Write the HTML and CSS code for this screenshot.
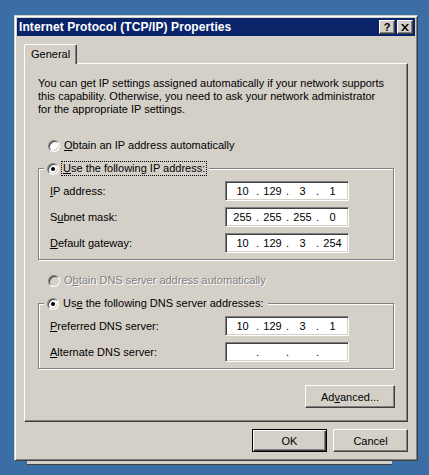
FILE: index.html
```html
<!DOCTYPE html>
<html lang="en">
<head>
    <meta charset="UTF-8">
    <meta name="viewport" content="width=device-width, initial-scale=1.0">
    <title>Internet Protocol (TCP/IP) Properties</title>
    <link rel="stylesheet" href="styles.css">
</head>
<body>
    <div class="window">
        <header class="title-bar">
            <span class="title-text">Internet Protocol (TCP/IP) Properties</span>
            <div class="caption-buttons">
                <span class="caption-btn">?</span>
                <span class="caption-btn close">
                    <svg width="8" height="7" viewBox="0 0 8 7"><path d="M0 0h2l2 2.5 2-2.5h2l-3 3.5 3 3.5h-2l-2-2.5-2 2.5h-2l3-3.5z" fill="#000"/></svg>
                </span>
            </div>
        </header>

        <div class="window-body">
            <div class="tabs">
                <div class="tab">General</div>
            </div>
            <div class="panel">
                <p class="intro">You can get IP settings assigned automatically if your network supports<br>this capability. Otherwise, you need to ask your network administrator<br>for the appropriate IP settings.</p>

                <div class="radio-row first-radio">
                    <span class="radio"></span>
                    <span class="label"><u>O</u>btain an IP address automatically</span>
                </div>

                <div class="group">
                    <div class="group-title">
                        <span class="radio checked"></span>
                        <span class="label focused"><u>U</u>se the following IP address:</span>
                    </div>
                    <div class="field-grid">
                        <span><u>I</u>P address:</span>
                        <div class="ip-field"><span>10</span><i>.</i><span>129</span><i>.</i><span>3</span><i>.</i><span>1</span></div>
                        <span>S<u>u</u>bnet mask:</span>
                        <div class="ip-field"><span>255</span><i>.</i><span>255</span><i>.</i><span>255</span><i>.</i><span>0</span></div>
                        <span><u>D</u>efault gateway:</span>
                        <div class="ip-field"><span>10</span><i>.</i><span>129</span><i>.</i><span>3</span><i>.</i><span>254</span></div>
                    </div>
                </div>

                <div class="radio-row disabled">
                    <span class="radio"></span>
                    <span class="label">O<u>b</u>tain DNS server address automatically</span>
                </div>

                <div class="group">
                    <div class="group-title">
                        <span class="radio checked"></span>
                        <span class="label">Us<u>e</u> the following DNS server addresses:</span>
                    </div>
                    <div class="field-grid">
                        <span><u>P</u>referred DNS server:</span>
                        <div class="ip-field"><span>10</span><i>.</i><span>129</span><i>.</i><span>3</span><i>.</i><span>1</span></div>
                        <span><u>A</u>lternate DNS server:</span>
                        <div class="ip-field"><span></span><i>.</i><span></span><i>.</i><span></span><i>.</i><span></span></div>
                    </div>
                </div>

                <div class="advanced-row">
                    <button class="btn wide">Ad<u>v</u>anced...</button>
                </div>
            </div>

            <div class="dialog-buttons">
                <button class="btn default">OK</button>
                <button class="btn">Cancel</button>
            </div>
        </div>
    </div>
    <div class="behind"></div>
</body>
</html>
```

FILE: styles.css
```css
body {
    margin: 0;
    padding: 15px 0 0 14px;
    background-color: #3a6ea5;
    font-family: 'Liberation Sans', Arial, sans-serif;
    font-size: 11px;
    color: #000000;
}
u {
    text-decoration: underline;
    text-underline-offset: 1px;
}
.window {
    width: 404px;
    box-sizing: border-box;
    background-color: #d4d0c8;
    border: 1px solid;
    border-color: #d4d0c8 #404040 #404040 #d4d0c8;
    box-shadow: inset 1px 1px 0 #ffffff, inset -1px -1px 0 #808080;
    padding: 2px;
}
.title-bar {
    display: flex;
    justify-content: space-between;
    align-items: center;
    height: 18px;
    background-color: #0a246a;
    color: #ffffff;
    padding: 0 2px;
}
.title-text {
    font-weight: bold;
    font-size: 12px;
    letter-spacing: 0.1px;
}
.caption-buttons {
    display: flex;
    gap: 2px;
}
.caption-btn {
    display: flex;
    justify-content: center;
    align-items: center;
    width: 16px;
    height: 14px;
    box-sizing: border-box;
    background-color: #d4d0c8;
    color: #000000;
    font-weight: bold;
    font-size: 11px;
    border: 1px solid;
    border-color: #ffffff #404040 #404040 #ffffff;
    box-shadow: inset -1px -1px 0 #808080;
}
.window-body {
    padding: 8px 7px 6px 7px;
}
.tabs {
    display: flex;
}
.tab {
    position: relative;
    z-index: 1;
    height: 20px;
    box-sizing: border-box;
    padding: 3px 6px 0 6px;
    margin-bottom: -1px;
    background-color: #d4d0c8;
    border: 1px solid;
    border-bottom: none;
    border-color: #ffffff #404040 transparent #ffffff;
    border-radius: 2px 2px 0 0;
    box-shadow: inset -1px 0 0 #808080;
}
.panel {
    display: flex;
    flex-direction: column;
    height: 359px;
    box-sizing: border-box;
    border: 1px solid;
    border-color: #ffffff #404040 #404040 #ffffff;
    box-shadow: inset -1px -1px 0 #808080;
}
.intro {
    margin: 0;
    padding: 13px 0 0 13px;
    line-height: 13px;
}
.radio-row {
    display: flex;
    align-items: center;
    height: 13px;
    margin: 14px 0 0 23px;
}
.first-radio {
    margin-top: 23px;
}
.radio {
    position: relative;
    display: inline-block;
    width: 12px;
    height: 12px;
    box-sizing: border-box;
    border-radius: 50%;
    background-color: #ffffff;
    border: 1px solid;
    border-color: #808080 #ffffff #ffffff #808080;
    box-shadow: inset 1px 1px 0 #404040, inset -1px -1px 0 #d4d0c8;
    flex-shrink: 0;
}
.radio.checked::after {
    content: "";
    position: absolute;
    left: 3px;
    top: 3px;
    width: 4px;
    height: 4px;
    border-radius: 50%;
    background-color: #000000;
}
.label {
    margin-left: 2px;
    padding: 0 1px;
    border: 1px dotted transparent;
    line-height: 13px;
}
.label.focused {
    border-color: #000000;
}
.disabled .radio {
    background-color: #d4d0c8;
}
.disabled .label {
    color: #808080;
    text-shadow: 1px 1px 0 #ffffff;
}
.group {
    display: flex;
    flex-direction: column;
    margin: 16px 13px 0 13px;
    padding: 0 0 6px 11px;
    border: 1px solid #808080;
    box-shadow: inset 1px 1px 0 #ffffff, 1px 1px 0 #ffffff;
}
.group-title {
    display: flex;
    align-items: center;
    align-self: flex-start;
    height: 15px;
    margin: -8px 0 0 -6px;
    padding: 0 2px 0 3px;
    background-color: #d4d0c8;
}
.field-grid {
    display: grid;
    grid-template-columns: 175px 124px;
    grid-auto-rows: 20px;
    row-gap: 6px;
    align-items: center;
    margin-top: 5px;
}
.ip-field {
    display: flex;
    align-items: center;
    height: 20px;
    box-sizing: border-box;
    padding-left: 5px;
    background-color: #ffffff;
    border: 1px solid;
    border-color: #808080 #ffffff #ffffff #808080;
    box-shadow: inset 1px 1px 0 #404040, inset -1px -1px 0 #d4d0c8;
}
.ip-field span {
    width: 23px;
    text-align: center;
}
.ip-field i {
    width: 7px;
    font-style: normal;
    text-align: center;
}
.advanced-row {
    display: flex;
    justify-content: flex-end;
    margin: 16px 12px 0 0;
}
.btn {
    width: 75px;
    height: 23px;
    box-sizing: border-box;
    padding: 0;
    font-family: inherit;
    font-size: 11px;
    color: #000000;
    background-color: #d4d0c8;
    border: 1px solid;
    border-color: #ffffff #404040 #404040 #ffffff;
    box-shadow: inset -1px -1px 0 #808080;
    border-radius: 0;
}
.btn.wide {
    width: 90px;
}
.btn.default {
    border-color: #000000;
    box-shadow: inset 1px 1px 0 #ffffff, inset -1px -1px 0 #404040, inset -2px -2px 0 #808080;
}
.dialog-buttons {
    display: flex;
    justify-content: flex-end;
    gap: 6px;
    margin-top: 7px;
}
.behind {
    width: 365px;
    height: 3px;
    margin-left: 13px;
    background-color: #d4d0c8;
    border-bottom: 1px solid #404040;
}
```
